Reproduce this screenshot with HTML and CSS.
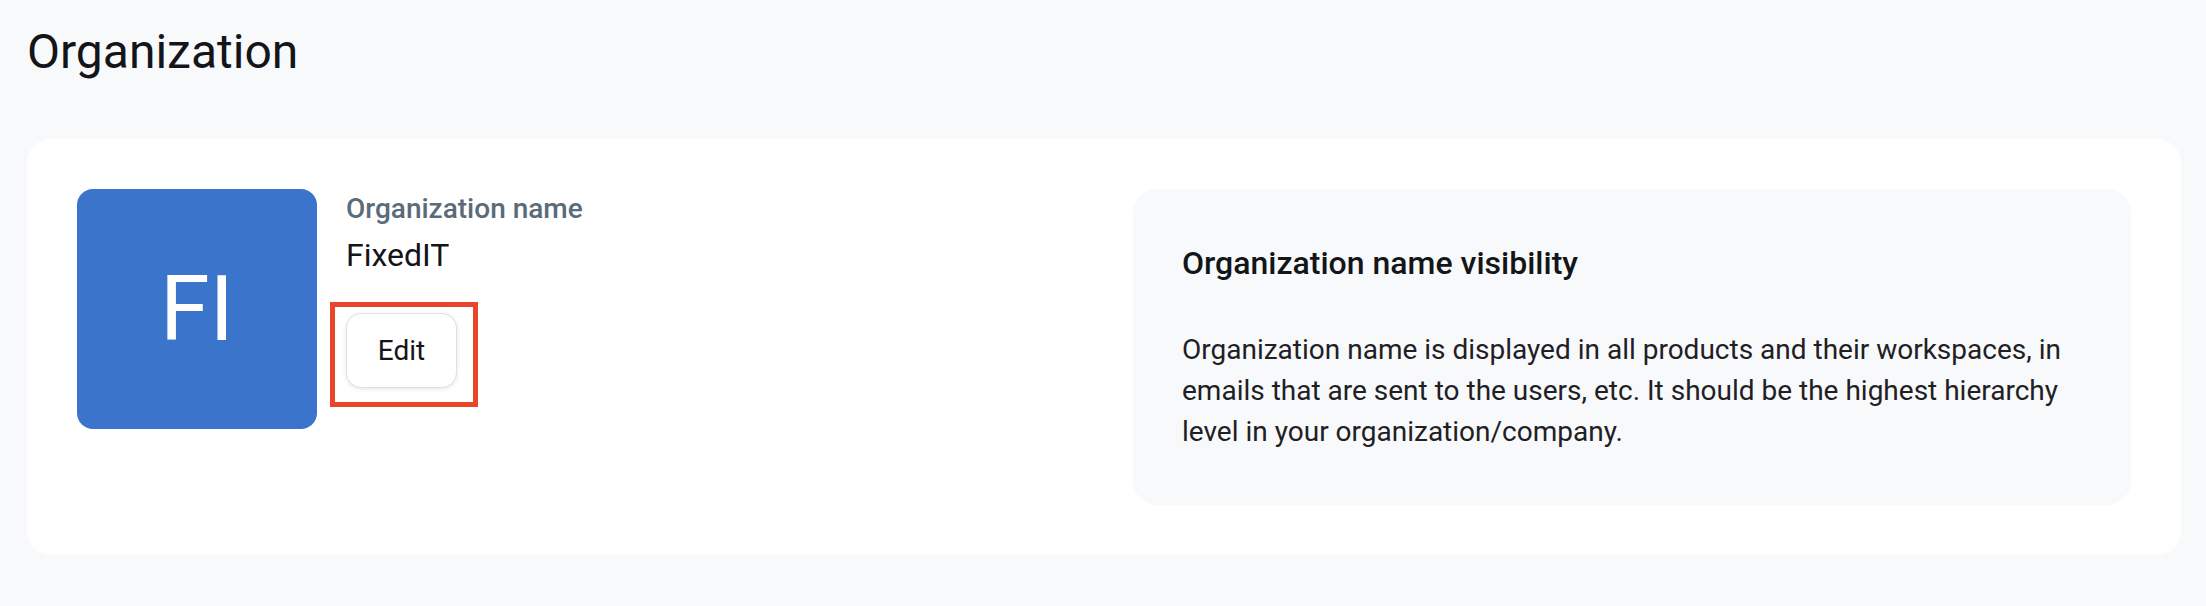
FILE: index.html
```html
<!DOCTYPE html>
<html lang="en">
<head>
    <meta charset="UTF-8">
    <meta name="viewport" content="width=device-width, initial-scale=1.0">
    <title>Organization</title>
    <link rel="stylesheet" href="styles.css">
</head>
<body>

<div class="page">
    <h1>Organization</h1>

    <div class="card">
        <div class="org-info">
            <div class="avatar">FI</div>
            <div class="org-details">
                <div class="label">Organization name</div>
                <div class="org-name">FixedIT</div>
                <span class="highlight">
                    <button class="edit-btn" type="button">Edit</button>
                </span>
            </div>
        </div>

        <div class="info-panel">
            <h2>Organization name visibility</h2>
            <p>Organization name is displayed in all products and their workspaces, in emails that are sent to the users, etc. It should be the highest hierarchy level in your organization/company.</p>
        </div>
    </div>
</div>

</body>
</html>
```

FILE: styles.css
```css
body {
    font-family: Roboto, "Noto Sans", Arial, sans-serif;
    background-color: #f8f9fb;
    color: #1b1c1f;
    margin: 0;
    padding: 0;
}

.page {
    padding: 24px 25px 0 27px;
}

h1 {
    font-size: 48px;
    font-weight: 400;
    line-height: 56px;
    margin: 0 0 59px 0;
    color: #141518;
}

.card {
    background-color: #fff;
    border-radius: 24px;
    padding: 50px;
    display: grid;
    grid-template-columns: 1fr 998px;
    align-items: start;
}

.org-info {
    display: flex;
    gap: 29px;
}

.avatar {
    width: 240px;
    height: 240px;
    border-radius: 16px;
    background-color: #3a74cb;
    color: #fff;
    font-size: 90px;
    display: flex;
    align-items: center;
    justify-content: center;
}

.org-details {
    display: flex;
    flex-direction: column;
    align-items: flex-start;
}

.label {
    font-size: 28px;
    font-weight: 500;
    line-height: 40px;
    color: #5a6b79;
}

.org-name {
    font-size: 32px;
    line-height: 44px;
    margin-top: 4px;
    color: #141518;
}

.highlight {
    position: relative;
    margin-top: 36px;
}

/* annotation frame around the button */
.highlight::after {
    content: "";
    position: absolute;
    top: -11px;
    left: -16px;
    right: -21px;
    bottom: -19px;
    border: 5px solid #e8452b;
}

.edit-btn {
    font-family: inherit;
    font-size: 28px;
    color: #141518;
    background-color: #fff;
    width: 111px;
    height: 75px;
    padding: 0;
    border: 1px solid #dfe0e4;
    border-radius: 15px;
    box-shadow: 0 1px 4px rgba(0, 0, 0, 0.1);
    cursor: pointer;
    display: block;
}

.info-panel {
    background-color: #f8f9fb;
    border-radius: 24px;
    padding: 50px 50px 53px 49px;
}

.info-panel h2 {
    font-size: 32px;
    font-weight: 500;
    line-height: 48px;
    margin: 0;
    color: #141518;
}

.info-panel p {
    font-size: 28px;
    line-height: 41px;
    margin: 42px 0 0 0;
    color: #1f2023;
}
```
